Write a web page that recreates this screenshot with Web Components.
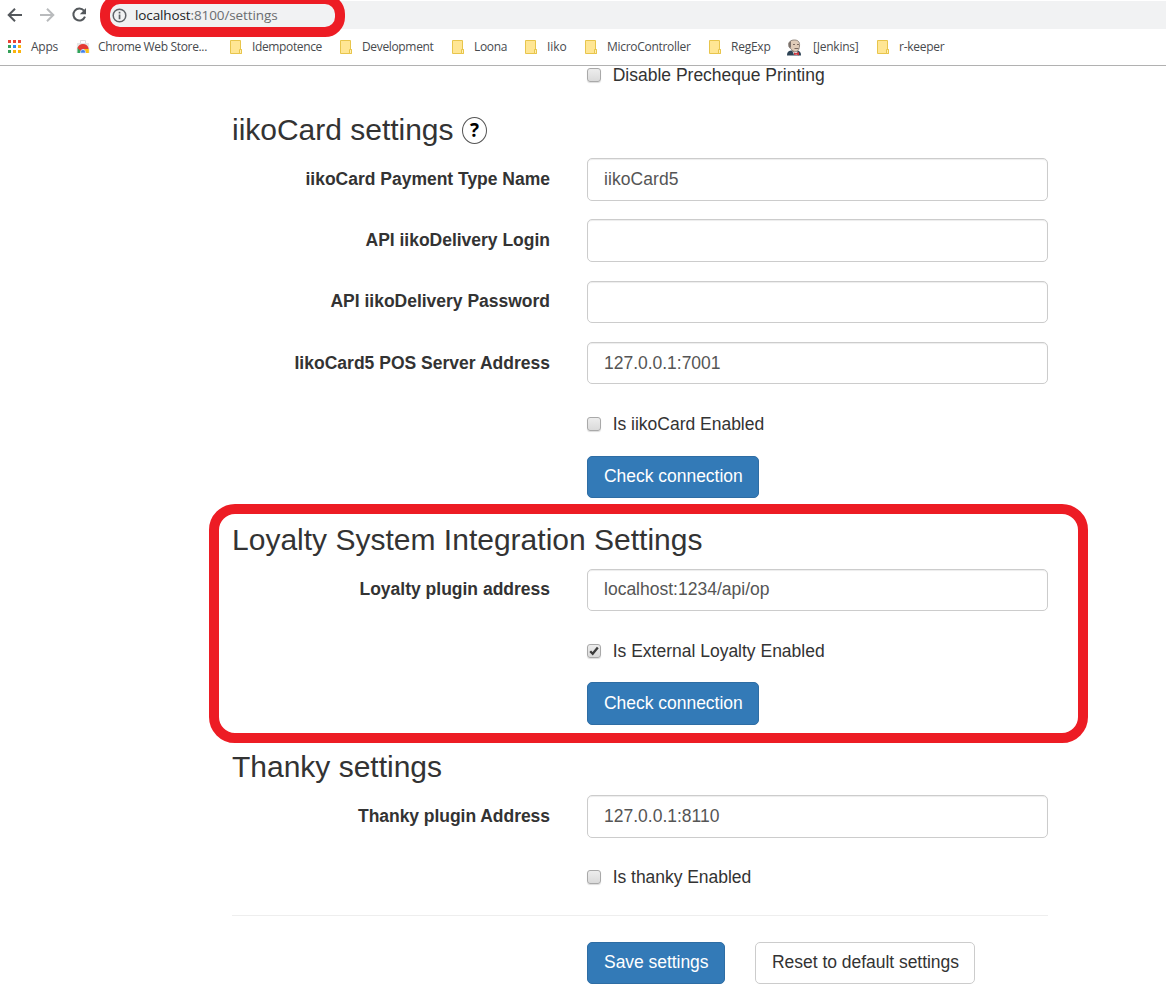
<!DOCTYPE html>
<html lang="en"><head><meta charset="utf-8"><title>Settings</title>
<style>
html,body{margin:0;height:992px;overflow:hidden;background:#fff}
body{font-family:"Liberation Sans",Arial,sans-serif;font-size:17.5px;color:#333}
</style></head><body>
<settings-app></settings-app>
<script>
const define=(name,html,setup)=>customElements.define(name,class extends HTMLElement{
  connectedCallback(){
    if(this.shadowRoot)return;
    const t=document.createElement('template');t.innerHTML=html;
    this.attachShadow({mode:'open'}).append(t.content.cloneNode(true));
    if(setup)setup(this,this.shadowRoot);
  }
});

// Text spaced evenly so that it takes up the width given in "w".
define('fit-text','<style>:host{display:inline-block;white-space:pre}</style><span><slot></slot></span>',(el,root)=>{
  const w=+el.getAttribute('w');
  if(!w)return;
  const now=root.querySelector('span').getBoundingClientRect().width;
  el.style.letterSpacing=((w-.5-now)/el.textContent.length)+'px';
});

const folder='<svg width="14" height="16" viewBox="0 0 14 16"><path d="M.5 1.5h10v9h1v4H.5z" fill="#ffe694" stroke="#e8c54c"/><path d="M9.5 10.5h2v4h-2z" fill="#fff0b5" stroke="#e8c54c"/></svg>';
const icons={
 folder,
 apps:'<svg width="14" height="16" viewBox="0 0 14 16"><g fill="#ea4335"><path d="M0 1h3v3H0zM5 1h3v3H5zM10 1h3v3h-3z"/></g><path fill="#34a058" d="M0 6h3v3H0zM0 11h3v3H0z"/><path fill="#2a8af6" d="M5 6h3v3H5z"/><path fill="#fbb30c" d="M10 6h3v3h-3zM5 11h3v3H5zM10 11h3v3h-3z"/></svg>',
 store:'<svg width="14" height="16" viewBox="0 0 14 16"><path d="M4.500 4V1.500h5V4" fill="none" stroke="#dcdcdc"/><path d="M1 4h12l.5 10H.5z" fill="#e6e6e6"/><path d="M1.500 8.500L6 11.500V14H1.500z" fill="#2ea55b"/><path d="M1.500 9a5.800 5.800 0 0 1 11 0v1H7L4.500 12z" fill="#e43a32"/><path d="M8 10h4.800v4H8z" fill="#fbc116"/><path d="M4.500 14v-1a2.500 2.500 0 0 1 5 0v1z" fill="#3d7ff0" stroke="#dfe9fb" stroke-width=".7"/></svg>',
 jenkins:'<svg width="17" height="17" viewBox="0 0 17 17"><path d="M1 16.500c0-3 1-4.500 4-5h6c3 .5 4 2 4 5z" fill="#2d4355"/><path d="M6 11h5l1 5H8z" fill="#ddd"/><path d="M3 6C2.500 2.500 5 1 8.500 1S14 3 13.500 7 12 12.500 9.500 12.500 4 10 3 6z" fill="#e0ccb8" stroke="#91867c"/><path d="M2.500 4l2.500-2v5.500l-1 2-1.500-2z" fill="#7b716b"/><path d="M7 5.500h2m2 0h2M8.500 9.500h4" stroke="#7b6a60"/><path d="M6 11.500l2 1.500" stroke="#8b7c70"/><path d="M8 13.500l2 .8 3-1.300v3.500l-2.500-1-2.500.5z" fill="#c9333a"/></svg>'
};
define('book-mark','<style>:host{display:flex;align-items:center;font:12px "Open Sans",sans-serif;color:#474a4e}i{display:flex;width:var(--gap,22px);flex:none}::slotted(fit-text){margin-top:-1px}</style><i></i><slot></slot>',(el,root)=>{
  root.querySelector('i').innerHTML=icons[el.getAttribute('icon')||'folder'];
});

define('browser-bar',`<style>
:host{display:block;position:relative;z-index:2;height:65px;background:#fff;border-bottom:1px solid #b1b1b1}
nav{display:flex;align-items:center;height:30px;padding-left:7px}
nav svg{display:block;flex:none}
.omni{position:relative;flex:1;height:28px;margin-left:18px;background:#f1f2f3;display:flex;align-items:center;font:13.5px "Open Sans",sans-serif;color:#6a6d70}
.omni>svg{margin:0 8px 0 6px}.omni b{font-weight:400;color:#212225}
.mark{position:absolute;left:-6px;top:-7px;width:224.500px;height:23px;border:10px solid #ed1c24;border-radius:20px}
.books{display:grid;height:34px;grid-template-columns:68px 154px 110px 112px 73px 60px 124px 77px 91px 80px;padding-left:8px}
</style>
<nav>
<svg width="16" height="16" viewBox="0 0 16 16" fill="none" stroke="#54585c" stroke-width="2"><path d="M15 8H2M8 1.700L1.700 8 8 14.300"/></svg>
<svg style="margin-left:17px" width="16" height="16" viewBox="0 0 16 16" fill="none" stroke="#b9bbbd" stroke-width="2"><path d="M0 8h13M7 1.700L13.300 8 7 14.300"/></svg>
<svg style="margin-left:15px" width="17" height="16" viewBox="0 0 17 16"><path d="M13 3.700A6 6 0 1 0 14 9.700" fill="none" stroke="#54585c" stroke-width="2"/><path d="M15 1v6.200H8.800z" fill="#54585c"/></svg>
<div class="omni"><div class="mark"></div>
<svg width="15" height="15" viewBox="0 0 15 15"><circle cx="7.500" cy="7.500" r="6.300" fill="none" stroke="#5f6368" stroke-width="1.500"/><path d="M6.700 6.500h1.700v4.700H6.700zM6.700 3.700h1.700v1.700H6.700z" fill="#5f6368"/></svg>
<fit-text w="143"><b>localhost</b>:8100/settings</fit-text></div></nav>
<div class="books">
<book-mark icon="apps" style="--gap:23px"><fit-text w="27.5">Apps</fit-text></book-mark>
<book-mark icon="store"><fit-text w="109.5">Chrome Web Store...</fit-text></book-mark>
<book-mark><fit-text w="70.5">Idempotence</fit-text></book-mark>
<book-mark><fit-text w="72">Development</fit-text></book-mark>
<book-mark><fit-text w="33.5">Loona</fit-text></book-mark>
<book-mark><fit-text w="20">Iiko</fit-text></book-mark>
<book-mark><fit-text w="84">MicroController</fit-text></book-mark>
<book-mark><fit-text w="40">RegExp</fit-text></book-mark>
<book-mark icon="jenkins" style="--gap:27px"><fit-text w="46">[Jenkins]</fit-text></book-mark>
<book-mark><fit-text w="46">r-keeper</fit-text></book-mark>
</div>`);

define('form-row',`<style>
:host{display:grid;grid-template-columns:318px 461px;column-gap:37px;height:61.25px}
label{font-weight:700;text-align:right;line-height:25px;padding-top:8.800px}
.box{box-sizing:border-box;height:42.5px;border:1px solid #ccc;border-radius:5px;box-shadow:inset 0 1px 1px rgba(0,0,0,.075);padding:7.800px 16px 0;line-height:25px;color:#555}
</style><label></label><div class="box"><slot></slot></div>`,(el,root)=>{root.querySelector('label').innerHTML=`<fit-text w="${el.getAttribute('lw')}">${el.getAttribute('label')}</fit-text>`;});

define('check-row',`<style>
:host{display:flex;align-items:center;box-sizing:border-box;height:41.5px;padding-left:355px;margin-bottom:11px}
i{box-sizing:border-box;width:14px;height:14px;margin:0 11.700px 0 0;border:1px solid #a9a9a9;border-radius:3px;background:linear-gradient(#ededed,#dadada);box-shadow:0 1px 1px #ddd}
svg{display:none;width:12px;height:12px}:host([checked]) svg{display:block}
::slotted(fit-text){margin-top:1px}
</style><i><svg viewBox="0 0 12 12"><path d="M2.200 6.200l2.500 2.600L9.800 2.500" fill="none" stroke="#3c3c3c" stroke-width="2.300"/></svg></i><slot></slot>`);

define('push-button',`<style>
:host{display:flex;box-sizing:border-box;width:fit-content;height:42.5px;padding:7.600px 16px 0;border:1px solid #2e6da4;border-radius:5px;background:#337ab7;color:#fff;line-height:25px}
:host([plain]){border-color:#ccc;background:#fff;color:#333}
</style><slot></slot>`);

define('settings-section',`<style>
:host{display:block;position:relative;padding-top:25px}
h3{display:flex;margin:0;height:45.5px;font-weight:400;font-size:30px;line-height:33px}
:host([marked])::after{content:"";position:absolute;left:-23px;top:6px;width:859px;height:219px;border:10px solid #ed1c24;border-radius:26px}
</style><h3><slot name="title"></slot></h3><slot></slot>`);

define('help-mark',`<style>:host{display:block;box-sizing:border-box;width:25px;height:27px;margin:4px 0 0 8.500px;border:1px solid #555;border-radius:50%;text-align:center;font:700 19px/25px "Open Sans",sans-serif;color:#000}</style>?`);

define('settings-app',`<style>
:host{display:block}
main{width:816px;padding-left:232px}
.first{height:18px;margin-bottom:3.6px}
.action{margin-left:355px}
hr{border:0;border-top:1px solid #eee;margin:17px 0 25.600px;height:0}
footer{display:flex;gap:30px;padding-left:355px}
</style>
<browser-bar></browser-bar>
<main>
<check-row class="first"><fit-text w="212.5">Disable Precheque Printing</fit-text></check-row>
<settings-section><fit-text slot="title" w="222">iikoCard settings</fit-text><help-mark slot="title"></help-mark>
<form-row label="iikoCard Payment Type Name" lw="245"><fit-text w="75">iikoCard5</fit-text></form-row>
<form-row label="API iikoDelivery Login" lw="185"></form-row>
<form-row label="API iikoDelivery Password" lw="220"></form-row>
<form-row label="IikoCard5 POS Server Address" lw="256"><fit-text w="117">127.0.0.1:7001</fit-text></form-row>
<check-row><fit-text w="152">Is iikoCard Enabled</fit-text></check-row>
<push-button class="action"><fit-text w="139.2" style="width:138px">Check connection</fit-text></push-button>
</settings-section>
<settings-section marked><fit-text slot="title" w="471">Loyalty System Integration Settings</fit-text>
<form-row label="Loyalty plugin address" lw="191"><fit-text w="166">localhost:1234/api/op</fit-text></form-row>
<check-row checked><fit-text w="212.5">Is External Loyalty Enabled</fit-text></check-row>
<push-button class="action"><fit-text w="139.2" style="width:138px">Check connection</fit-text></push-button>
</settings-section>
<settings-section><fit-text slot="title" w="210.5">Thanky settings</fit-text>
<form-row label="Thanky plugin Address" lw="192.5"><fit-text w="116">127.0.0.1:8110</fit-text></form-row>
<check-row><fit-text w="139">Is thanky Enabled</fit-text></check-row>
</settings-section>
<hr>
<footer><push-button><fit-text w="105" style="width:104px">Save settings</fit-text></push-button><push-button plain><fit-text w="187.5" style="width:186px">Reset to default settings</fit-text></push-button></footer>
</main>`);
</script></body></html>
